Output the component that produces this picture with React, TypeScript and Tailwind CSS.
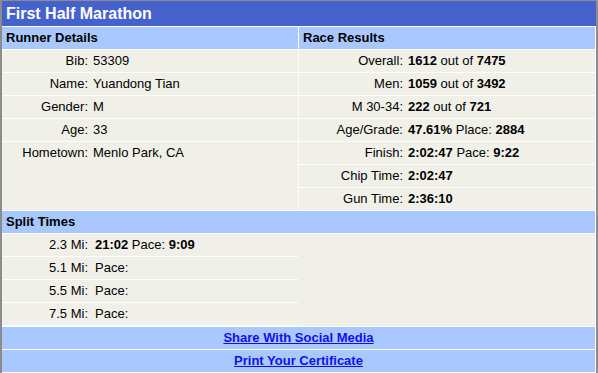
import React from "react";

type Row = { label: string; value: React.ReactNode };

const runner: Row[] = [
  { label: "Bib:", value: "53309" },
  { label: "Name:", value: "Yuandong Tian" },
  { label: "Gender:", value: "M" },
  { label: "Age:", value: "33" },
  { label: "Hometown:", value: "Menlo Park, CA" },
];

const results: Row[] = [
  { label: "Overall:", value: <><b>1612</b> out of <b>7475</b></> },
  { label: "Men:", value: <><b>1059</b> out of <b>3492</b></> },
  { label: "M 30-34:", value: <><b>222</b> out of <b>721</b></> },
  { label: "Age/Grade:", value: <><b>47.61%</b> Place: <b>2884</b></> },
  { label: "Finish:", value: <><b>2:02:47</b> Pace: <b>9:22</b></> },
  { label: "Chip Time:", value: <b>2:02:47</b> },
  { label: "Gun Time:", value: <b>2:36:10</b> },
];

const splits: Row[] = [
  { label: "2.3 Mi:", value: <><b>21:02</b> Pace: <b>9:09</b></> },
  { label: "5.1 Mi:", value: "Pace:" },
  { label: "5.5 Mi:", value: "Pace:" },
  { label: "7.5 Mi:", value: "Pace:" },
];

function DetailList({
  rows,
  labelClass,
  valueClass = "pl-[3px]",
  lastLine,
}: {
  rows: Row[];
  labelClass: string;
  valueClass?: string;
  lastLine?: boolean;
}) {
  return (
    <div className="flex flex-col">
      {rows.map((r, i) => (
        <div
          key={r.label}
          className={
            i < rows.length - 1 || lastLine
              ? "h-[23px] flex items-center border-b border-white"
              : "h-[22px] flex items-center"
          }
        >
          <span className={`${labelClass} text-right shrink-0`}>{r.label}</span>
          <span className={`${valueClass} whitespace-nowrap`}>{r.value}</span>
        </div>
      ))}
    </div>
  );
}

export default function App() {
  return (
    <div className="w-[598px] h-[373px] overflow-hidden bg-white text-[13px] text-black font-['Liberation_Sans',Arial,sans-serif]">
      <div className="border-t border-l-2 border-r-2 border-[#8c8c8c] h-[373px]">
        <div className="h-[25px] bg-[#4561cc] text-white font-bold text-[16px] flex items-center pl-1">
          First Half Marathon
        </div>
        <div className="grid grid-cols-2 gap-px pt-px pr-px">
          <div className="h-[22px] bg-[#a8c8ff] font-bold flex items-center pl-1">
            Runner Details
          </div>
          <div className="h-[22px] bg-[#a8c8ff] font-bold flex items-center pl-1">
            Race Results
          </div>

          <div className="bg-[#f0f0e8]">
            <DetailList rows={runner} labelClass="w-[88px] pr-0.5" />
          </div>
          <div className="bg-[#f0f0e8]">
            <DetailList rows={results} labelClass="w-[106px] pr-0.5" />
          </div>

          <div className="col-span-2 h-[22px] bg-[#a8c8ff] font-bold flex items-center pl-1">
            Split Times
          </div>
          <div className="col-span-2 bg-[#f0f0e8]">
            <div className="w-[296px]">
              <DetailList
                rows={splits}
                labelClass="w-[89px] pr-[3px]"
                valueClass="pl-[4px]"
                lastLine
              />
            </div>
          </div>

          <div className="col-span-2 h-[22px] bg-[#a8c8ff] flex items-center justify-center">
            <a href="#" className="font-bold underline text-[#1010ee]">
              Share With Social Media
            </a>
          </div>
          <div className="col-span-2 h-[22px] bg-[#a8c8ff] flex items-center justify-center">
            <a href="#" className="font-bold underline text-[#1010ee]">
              Print Your Certificate
            </a>
          </div>
          <div className="col-span-2 h-[22px] bg-[#f0f0e8]" />
        </div>
      </div>
    </div>
  );
}
